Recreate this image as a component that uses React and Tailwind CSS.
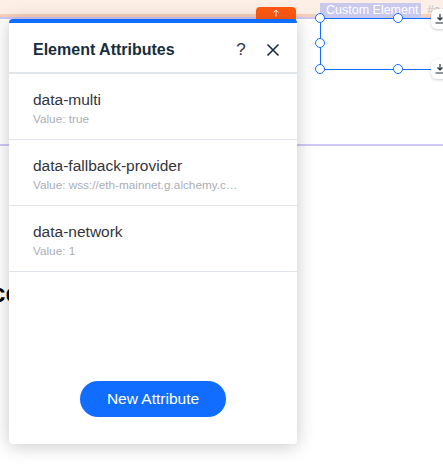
import React from "react";

const font = { fontFamily: '"Liberation Sans", Arial, sans-serif' };

function Handle({ className }) {
  return (
    <div
      className={`absolute w-[10px] h-[10px] rounded-full bg-white border-[1.5px] border-[#116dff] ${className}`}
    />
  );
}

function DlIcon() {
  return (
    <svg width="12" height="12" viewBox="0 0 12 12" fill="none" stroke="#20303c" strokeWidth="1.2">
      <path d="M6 1v6M3.5 4.5 6 7l2.5-2.5M1.5 10h9" />
    </svg>
  );
}

function SideButton() {
  return (
    <div className="w-[24px] h-[20px] rounded-[6px] bg-white shadow-[0_1px_3px_rgba(0,0,0,0.2)] flex items-center pl-[3px]">
      <DlIcon />
    </div>
  );
}

function Item({ name, value }) {
  return (
    <div className="h-[66px] border-b border-[#dfe5eb] pl-[24px] pt-[16px] flex flex-col">
      <div className="text-[15.5px] leading-[20px] text-[#32353c]">{name}</div>
      <div className="text-[11.75px] leading-[14px] text-[#aaadb8] mt-[2px]">{value}</div>
    </div>
  );
}

export default function App() {
  return (
    <div className="relative w-[443px] h-[465px] overflow-hidden bg-white" style={font}>
      {/* top strip */}
      <div className="h-[14px] bg-[#fdeee6]" />
      <div className="h-[3px] bg-[#f8cfbb]" />
      <div className="h-[2px] bg-[#cdc6f6]" />

      {/* canvas section */}
      <div className="h-[125px]" />
      <div className="h-[2px] bg-[#cfc8f8]" />
      <div className="pt-[132px] pl-0">
        <div className="ml-[-9px] text-[26px] font-bold text-black leading-[30px] whitespace-nowrap">ce</div>
      </div>

      {/* custom element on canvas */}
      <div className="absolute left-[320px] top-[3px] flex items-start gap-[6px]">
        <div className="w-[101px] h-[15px] bg-[#c9c9ee] text-white text-[12.5px] leading-[15px] pl-[6px]">
          Custom Element
        </div>
        <div className="text-[12px] leading-[14px] text-[#c0c0c8]">#c</div>
      </div>
      <div className="absolute left-[320px] top-[18px] w-[140px] h-[52px] border border-[#116dff] bg-white">
        <Handle className="left-[-6px] top-[-6px]" />
        <Handle className="left-[72px] top-[-6px]" />
        <Handle className="left-[-6px] top-[19px]" />
        <Handle className="left-[-6px] top-[45px]" />
        <Handle className="left-[72px] top-[45px]" />
      </div>
      <div className="absolute left-[431px] top-[9px] flex flex-col gap-[30px]">
        <SideButton />
        <SideButton />
      </div>

      {/* orange tab */}
      <div className="absolute left-[256px] top-[7px] w-[40px] h-[14px] rounded-t-[4px] bg-[#fe5a13] flex justify-center pt-[2px]">
        <svg width="8" height="8" viewBox="0 0 8 8" fill="none" stroke="#fff" strokeWidth="1">
          <path d="M4 7.5V1M1.5 3.5 4 1l2.5 2.5" />
        </svg>
      </div>

      {/* panel */}
      <div className="absolute left-[9px] top-[19px] w-[288px] h-[425px] bg-white rounded-[4px] border-t-[4px] border-[#116dff] shadow-[0_2px_18px_rgba(0,0,0,0.22)] flex flex-col">
        <div className="h-[51px] flex items-center pt-[5px] pl-[24px] pr-[16px] border-b-[2px] border-[#dfe5eb]">
          <div className="flex-1 text-[16px] font-bold text-[#162d3d]">Element Attributes</div>
          <div className="text-[17px] text-[#32363f] w-[20px] text-center mr-[15px]">?</div>
          <svg width="14" height="14" viewBox="0 0 14 14" fill="none" stroke="#162d3d" strokeWidth="1.6" className="mr-[1px]">
            <path d="M1.5 1.5l11 11M12.5 1.5l-11 11" />
          </svg>
        </div>
        <Item name="data-multi" value="Value: true" />
        <Item name="data-fallback-provider" value="Value: wss://eth-mainnet.g.alchemy.c…" />
        <Item name="data-network" value="Value: 1" />
        <div className="flex-1" />
        <div className="flex justify-center pb-[27px]">
          <button className="w-[146px] h-[36px] rounded-full bg-[#116dff] text-white text-[15.5px]">
            New Attribute
          </button>
        </div>
      </div>
    </div>
  );
}
